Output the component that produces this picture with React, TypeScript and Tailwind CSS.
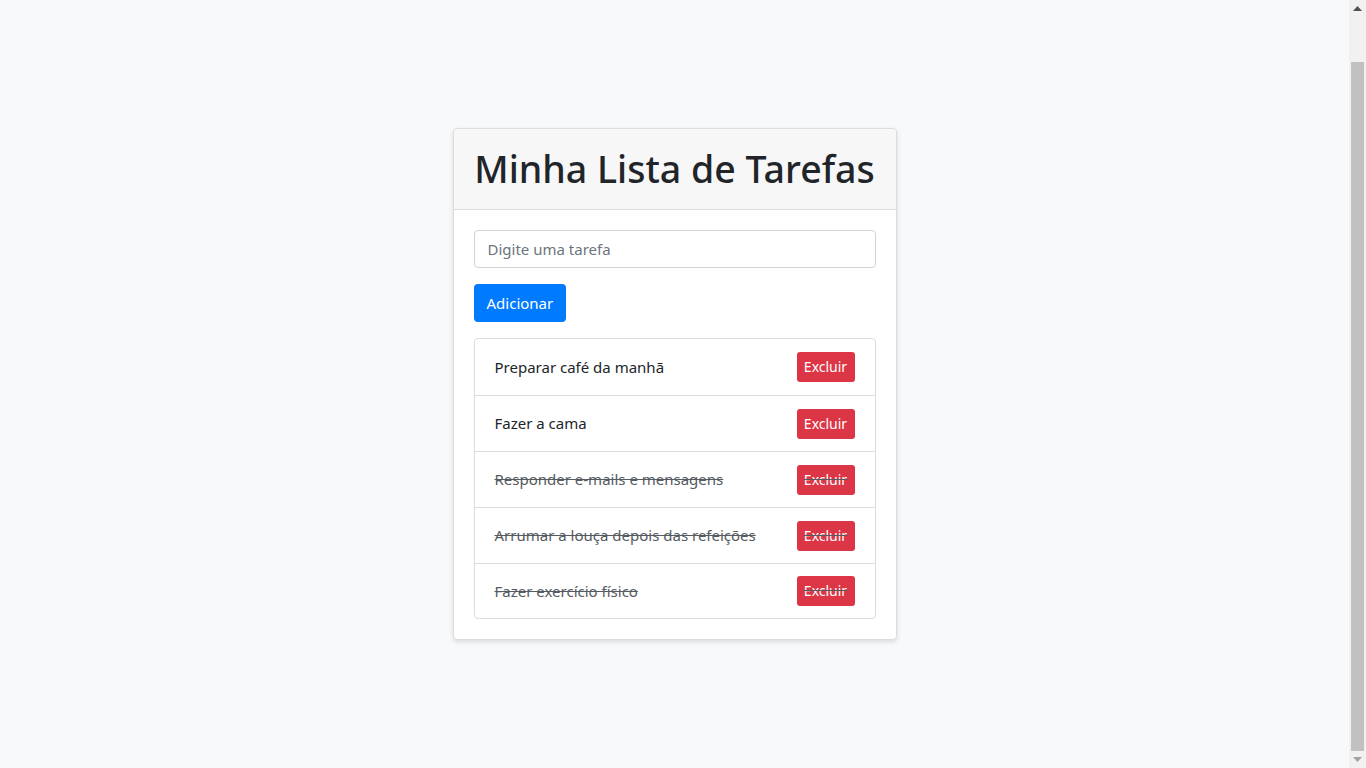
const tasks = [
  { text: "Preparar café da manhã", done: false },
  { text: "Fazer a cama", done: false },
  { text: "Responder e-mails e mensagens", done: true },
  { text: "Arrumar a louça depois das refeições", done: true },
  { text: "Fazer exercício físico", done: true },
];

function Scrollbar() {
  return (
    <div className="w-[17px] h-full bg-[#f1f1f1] flex flex-col items-center">
      <div className="h-[17px] flex items-center justify-center">
        <svg width="9" height="5" viewBox="0 0 9 5">
          <polygon points="0,5 4.5,0 9,5" fill="#505050" />
        </svg>
      </div>
      <div className="h-[45px]" />
      <div className="w-[13px] flex-1 bg-[#c1c1c1]" />
      <div className="h-[17px] flex items-center justify-center">
        <svg width="9" height="5" viewBox="0 0 9 5">
          <polygon points="0,0 4.5,5 9,0" fill="#a3a3a3" />
        </svg>
      </div>
    </div>
  );
}

export default function App() {
  return (
    <div
      className="h-screen flex overflow-hidden bg-[#f8f9fa] text-[#212529]"
      style={{ fontFamily: '"Noto Sans", "Open Sans", Arial, sans-serif' }}
    >
      <main className="flex-1 pt-[128px]">
        <div className="mx-auto w-[444px] bg-white border border-[#dcdcdc] rounded shadow-[0_2px_5px_rgba(0,0,0,0.12)]">
          <div className="bg-[#f7f7f7] border-b border-[#dcdcdc] rounded-t h-[81px] flex items-center justify-center">
            <h1 className="text-[37.5px] font-medium leading-tight text-[#212529]">
              Minha Lista de Tarefas
            </h1>
          </div>

          <div className="p-5">
            <input
              type="text"
              placeholder="Digite uma tarefa"
              className="w-full h-[38px] px-[13px] border border-[#ced4da] rounded text-[15px] text-[#495057] placeholder:text-[#6c757d] outline-none"
            />

            <button className="mt-4 h-[38px] px-[13px] bg-[#007bff] text-white text-[15px] rounded">
              Adicionar
            </button>

            <ul className="mt-4 border border-[#dcdcdc] rounded">
              {tasks.map((t, i) => (
                <li
                  key={i}
                  className={
                    "flex items-center justify-between px-5 text-[15px] " +
                    (i === tasks.length - 1 ? "h-[55px] " : "h-[56px] ") +
                    (i > 0 ? "border-t border-[#dcdcdc] " : "") +
                    (t.done ? "line-through text-[#555b61]" : "text-[#212529]")
                  }
                >
                  <span>{t.text}</span>
                  <button className="h-[30px] w-[58px] bg-[#dc3545] text-white text-sm rounded-[3px]">
                    Excluir
                  </button>
                </li>
              ))}
            </ul>
          </div>
        </div>
      </main>
      <Scrollbar />
    </div>
  );
}
